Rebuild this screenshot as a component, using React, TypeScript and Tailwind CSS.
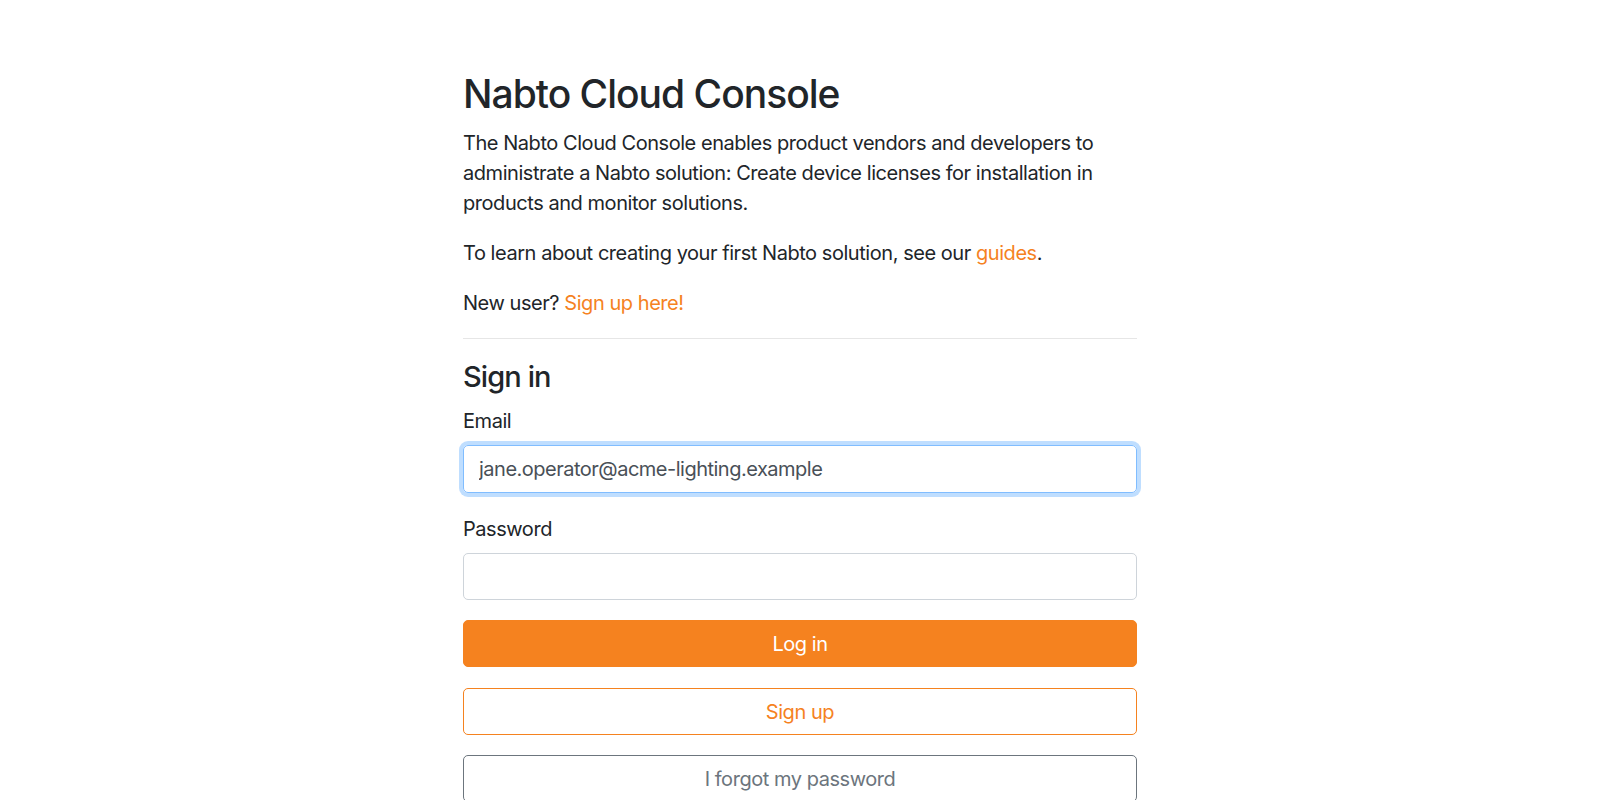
import React, { useState } from 'react';

const font = { fontFamily: 'Inter, "Noto Sans", sans-serif' };

export default function App() {
  const [email, setEmail] = useState('jane.operator@acme-lighting.example');
  const [password, setPassword] = useState('');

  return (
    <div className="h-screen overflow-hidden bg-white text-[#212529]" style={font}>
      <div className="mx-auto w-[674px] pt-[70px]">
        <h1 className="text-[39px] leading-[48px] tracking-[-1px] font-medium mb-[10px]">Nabto Cloud Console</h1>
        <p className="text-[20px] leading-[30px] tracking-[-0.45px] mb-[20px]">
          The Nabto Cloud Console enables product vendors and developers to administrate a Nabto
          solution: Create device licenses for installation in products and monitor solutions.
        </p>
        <p className="text-[20px] leading-[30px] tracking-[-0.45px] mb-[20px]">
          To learn about creating your first Nabto solution, see our{' '}
          <a href="#" className="text-[#f5821f] hover:underline">guides</a>.
        </p>
        <p className="text-[20px] leading-[30px] tracking-[-0.45px] mb-[20px]">
          New user? <a href="#" className="text-[#f5821f] hover:underline">Sign up here!</a>
        </p>
        <hr className="border-0 border-t border-[#e6e6e6] mb-[20px]" />

        <h4 className="text-[29px] leading-[36px] tracking-[-0.9px] font-medium mb-[11px]">Sign in</h4>
        <form className="text-[20px] leading-[30px] tracking-[-0.45px]" onSubmit={(e) => e.preventDefault()}>
          <div className="mb-[21px]">
            <label className="block mb-[9px]">Email</label>
            <input
              type="email"
              value={email}
              onChange={(e) => setEmail(e.target.value)}
              className="block w-full h-[47.5px] px-[15px] rounded-[5px] border border-[#80bdff] text-[#495057] tracking-[-0.5px] outline-none shadow-[0_0_0_4px_rgba(0,123,255,0.25)]"
              style={font}
            />
          </div>
          <div className="mb-[20px]">
            <label className="block mb-[9px]">Password</label>
            <input
              type="password"
              value={password}
              onChange={(e) => setPassword(e.target.value)}
              className="block w-full h-[47.5px] px-[15px] rounded-[5px] border border-[#ced4da] text-[#495057] outline-none"
              style={font}
            />
          </div>
          <button
            type="submit"
            className="block w-full h-[47px] rounded-[5px] bg-[#f5821f] border border-[#f5821f] text-white tracking-[-0.45px] mb-[21px]"
          >
            Log in
          </button>
          <button
            type="button"
            className="block w-full h-[47px] rounded-[5px] bg-white border border-[#f5821f] text-[#f5821f] tracking-[-0.45px] mb-[20px]"
          >
            Sign up
          </button>
          <button
            type="button"
            className="block w-full h-[47px] rounded-[5px] bg-white border border-[#6c757d] text-[#6c757d] tracking-[-0.45px]"
          >
            I forgot my password
          </button>
        </form>
      </div>
    </div>
  );
}
